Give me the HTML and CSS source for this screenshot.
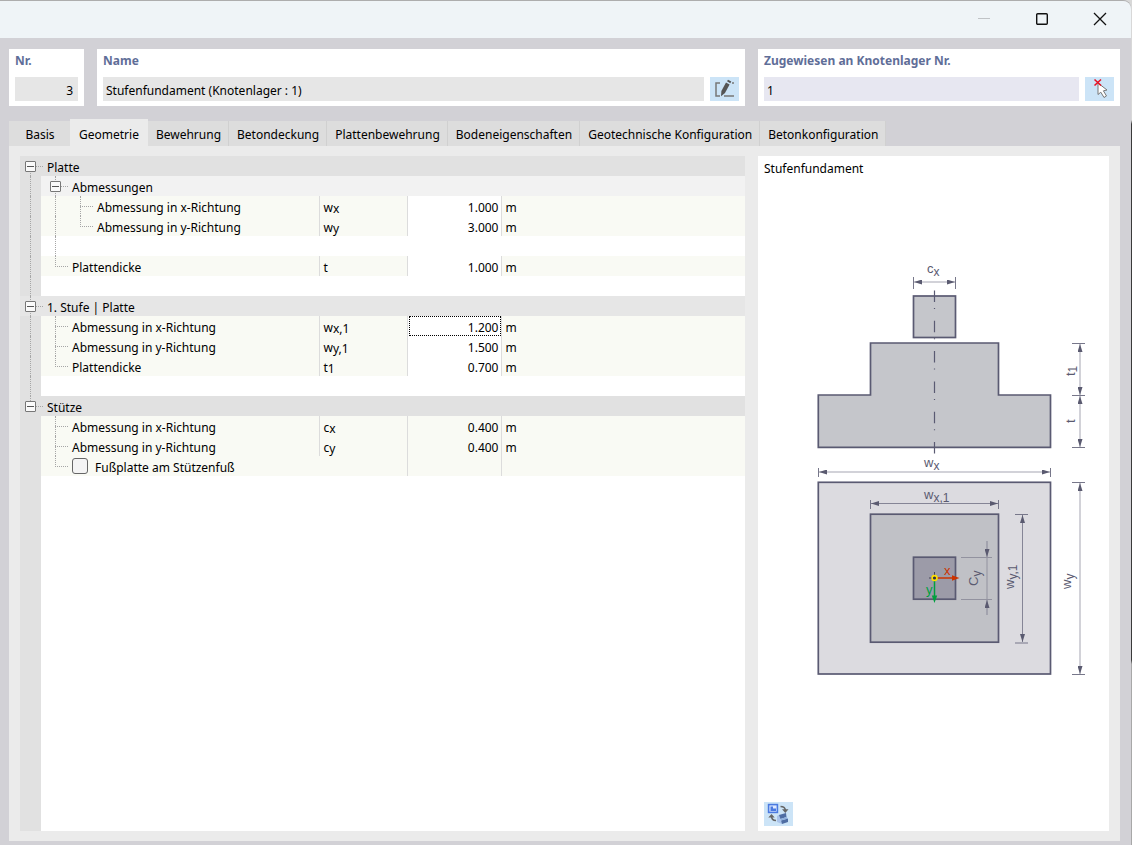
FILE: index.html
```
<!DOCTYPE html>
<html lang="de">
<head>
  <meta charset="UTF-8">
  <title>Stufenfundament</title>
  <link rel="stylesheet" href="styles.css">
</head>
<body>
  <div class="window">
    <div class="title-bar">
      <button class="win-btn" aria-label="Minimieren" disabled>
        <svg width="14" height="14"><path d="M1 6.5h12" stroke="#c0c3c6"/></svg>
      </button>
      <button class="win-btn" aria-label="Maximieren">
        <svg width="14" height="14"><rect x="1.7" y="1.7" width="10.6" height="10.6" rx="1" fill="none" stroke="#111" stroke-width="1.4"/></svg>
      </button>
      <button class="win-btn" aria-label="Schließen">
        <svg width="14" height="14"><path d="M1 1l12 12M13 1L1 13" stroke="#111" stroke-width="1.3"/></svg>
      </button>
    </div>

    <div class="content">
      <div class="head">
        <div class="box box-nr">
          <label for="nr">Nr.</label>
          <div class="field-row"><input class="field num" id="nr" value="3" readonly></div>
        </div>
        <div class="box box-name">
          <label for="name">Name</label>
          <div class="field-row">
            <input class="field" id="name" value="Stufenfundament (Knotenlager : 1)" readonly>
            <button class="icon-btn" aria-label="Name bearbeiten">
              <svg width="29" height="24">
                <path d="M10 6H6v13h4M14 19h10M22 6h2" fill="none" stroke="#777" stroke-width="1.5"/>
                <path d="M16 5.5l3.6 2-4.6 8.5-4 3.2.4-5.2z" fill="#555"/>
                <path d="M17 4.3l1-1.6 3.3 1.9-1 1.7z" fill="#555"/>
              </svg>
            </button>
          </div>
        </div>
      </div>
      <div class="box">
        <label for="assigned">Zugewiesen an Knotenlager Nr.</label>
        <div class="field-row">
          <input class="field assigned" id="assigned" value="1">
          <button class="icon-btn" aria-label="Auswählen">
            <svg width="29" height="24">
              <path d="M13 6v11.5l2.8-2.3 3.2 5.3 2.5-1.5-3.1-5.2 3.6-.8z" fill="#fff" stroke="#777"/>
              <path d="M9.5 2.5l6.5 6M16 2.5l-6.5 6" stroke="#e81123" stroke-width="1.6"/>
            </svg>
          </button>
        </div>
      </div>
    </div>

    <div class="tabs" role="tablist">
      <button class="tab first" role="tab">Basis</button>
      <button class="tab active" role="tab" aria-selected="true">Geometrie</button>
      <button class="tab" role="tab">Bewehrung</button>
      <button class="tab" role="tab">Betondeckung</button>
      <button class="tab" role="tab">Plattenbewehrung</button>
      <button class="tab" role="tab">Bodeneigenschaften</button>
      <button class="tab" role="tab">Geotechnische Konfiguration</button>
      <button class="tab" role="tab">Betonkonfiguration</button>
    </div>

    <div class="page">
      <div class="tree">
        <table>
          <colgroup>
            <col class="col-name"><col class="col-sym"><col class="col-val"><col>
          </colgroup>
          <tbody>
            <tr class="group"><td colspan="4"><div class="cell"><span class="guide start"><button class="toggle" aria-label="Platte einklappen"></button></span>Platte</div></td></tr>
            <tr class="subgroup"><td class="name" colspan="4"><div class="cell"><span class="guide line"></span><span class="guide tee"><button class="toggle" aria-label="Abmessungen einklappen"></button></span>Abmessungen</div></td></tr>
            <tr class="edit">
              <td class="name"><div class="cell"><span class="guide line"></span><span class="guide line"></span><span class="guide tee"></span><label for="wx">Abmessung in x-Richtung</label></div></td>
              <td>w<sub>x</sub></td><td class="val"><input id="wx" value="1.000"></td><td>m</td>
            </tr>
            <tr class="edit">
              <td class="name"><div class="cell"><span class="guide line"></span><span class="guide line"></span><span class="guide end"></span><label for="wy">Abmessung in y-Richtung</label></div></td>
              <td>w<sub>y</sub></td><td class="val"><input id="wy" value="3.000"></td><td>m</td>
            </tr>
            <tr class="blank"><td class="name" colspan="4"><div class="cell"><span class="guide line"></span><span class="guide line"></span></div></td></tr>
            <tr class="edit">
              <td class="name"><div class="cell"><span class="guide line"></span><span class="guide end"></span><label for="t">Plattendicke</label></div></td>
              <td>t</td><td class="val"><input id="t" value="1.000"></td><td>m</td>
            </tr>
            <tr class="blank"><td class="name" colspan="4"><div class="cell"><span class="guide line"></span></div></td></tr>

            <tr class="group light"><td colspan="4"><div class="cell"><span class="guide tee"><button class="toggle" aria-label="1. Stufe einklappen"></button></span>1. Stufe | Platte</div></td></tr>
            <tr class="edit">
              <td class="name"><div class="cell"><span class="guide line"></span><span class="guide tee"></span><label for="wx1">Abmessung in x-Richtung</label></div></td>
              <td>w<sub>x,1</sub></td><td class="val"><input class="current" id="wx1" value="1.200"></td><td>m</td>
            </tr>
            <tr class="edit">
              <td class="name"><div class="cell"><span class="guide line"></span><span class="guide tee"></span><label for="wy1">Abmessung in y-Richtung</label></div></td>
              <td>w<sub>y,1</sub></td><td class="val"><input id="wy1" value="1.500"></td><td>m</td>
            </tr>
            <tr class="edit">
              <td class="name"><div class="cell"><span class="guide line"></span><span class="guide end"></span><label for="t1">Plattendicke</label></div></td>
              <td>t<sub>1</sub></td><td class="val"><input id="t1" value="0.700"></td><td>m</td>
            </tr>
            <tr class="blank"><td class="name" colspan="4"><div class="cell"><span class="guide line"></span></div></td></tr>

            <tr class="group"><td colspan="4"><div class="cell"><span class="guide end"><button class="toggle" aria-label="Stütze einklappen"></button></span>Stütze</div></td></tr>
            <tr>
              <td class="name"><div class="cell"><span class="guide"></span><span class="guide tee"></span><label for="cx">Abmessung in x-Richtung</label></div></td>
              <td>c<sub>x</sub></td><td class="val"><input id="cx" value="0.400" readonly></td><td>m</td>
            </tr>
            <tr>
              <td class="name"><div class="cell"><span class="guide"></span><span class="guide tee"></span><label for="cy">Abmessung in y-Richtung</label></div></td>
              <td>c<sub>y</sub></td><td class="val"><input id="cy" value="0.400" readonly></td><td>m</td>
            </tr>
            <tr>
              <td class="name" colspan="2"><div class="cell"><span class="guide"></span><span class="guide end"></span><label class="check"><input type="checkbox">Fußplatte am Stützenfuß</label></div></td>
              <td></td><td></td>
            </tr>
          </tbody>
        </table>
      </div>

      <div class="preview">
        <div class="preview-title">Stufenfundament</div>
        <svg class="drawing" viewBox="0 0 301 430" width="301" height="430">
          <defs>
            <marker id="arrow" viewBox="0 0 8 5" refX="8" refY="2.5" markerWidth="8" markerHeight="5" markerUnits="userSpaceOnUse" orient="auto-start-reverse">
              <path d="M0 0l8 2.5L0 5z" fill="#5a5a70"/>
            </marker>
          </defs>

          <!-- Ansicht -->
          <g fill="#c5c6cb" stroke="#5a5a72" stroke-width="1.7">
            <rect x="129.5" y="41" width="42" height="41.5"/>
            <path d="M86.5 88h128v52h52v52.3H34.3V140h52.2z"/>
          </g>
          <path d="M150.5 35.5v163" stroke="#5a5a72" stroke-width="1.2" stroke-dasharray="11.5 6 1 11.8"/>

          <!-- Grundriss -->
          <g stroke="#5a5a72" stroke-width="1.7">
            <rect x="34.3" y="227.3" width="232.2" height="191.7" fill="#dcdbe0"/>
            <rect x="86.5" y="259.2" width="128" height="128" fill="#c0c1c6"/>
            <rect x="129.5" y="302.2" width="42" height="42" fill="#9c9ba8"/>
          </g>

          <!-- Maßlinien -->
          <g fill="none" stroke="#77778a">
            <path d="M129.5 22v12M171.5 22v12M34.5 213v9M266.5 213v9M86.5 245v9M214.5 245v9"/>
            <path d="M288 88.5h13M288 140.5h13M288 192.5h13M288 227.5h13M288 419.5h13M231 259.5h13M231 388h13"/>
            <path d="M177 302.5h31M177 344.5h31M203 302v42" stroke="#92929f"/>
          </g>
          <g fill="none" stroke="#a5a5b2" marker-start="url(#arrow)">
            <path d="M130 27h41" marker-end="url(#arrow)"/>
            <path d="M35 217h231" marker-end="url(#arrow)"/>
            <path d="M87 248.5h127" stroke="#858596" marker-end="url(#arrow)"/>
            <path d="M296 89v51" marker-end="url(#arrow)"/>
            <path d="M296 141v51" marker-end="url(#arrow)"/>
            <path d="M296 228v191" marker-end="url(#arrow)"/>
            <path d="M238.5 260v127" stroke="#858596" marker-end="url(#arrow)"/>
            <path d="M203 302v-16" stroke="#858596"/>
            <path d="M203 345v15" stroke="#858596"/>
          </g>

          <g class="dim">
            <text x="143" y="18">c<tspan class="s" dy="3">x</tspan></text>
            <text x="140" y="212">w<tspan class="s" dy="3">x</tspan></text>
            <text x="140" y="244">w<tspan class="s" dy="3">x,1</tspan></text>
            <text transform="translate(291 121) rotate(-90)">t<tspan class="s" dy="2">1</tspan></text>
            <text transform="translate(291 168) rotate(-90)">t</text>
            <text transform="translate(194 331) rotate(-90)">C<tspan class="s" dy="3">y</tspan></text>
            <text transform="translate(230 334) rotate(-90)">w<tspan class="s" dy="3">y,1</tspan></text>
            <text transform="translate(287 334) rotate(-90)">w<tspan class="s" dy="3">y</tspan></text>
          </g>

          <!-- Achsen -->
          <path d="M145 323h3M150.5 317v3" stroke="#44445a"/>
          <path d="M153.5 323h15" stroke="#cc3300" stroke-width="1.5"/>
          <path d="M168 320.3l7.5 2.7-7.5 2.7z" fill="#cc3300"/>
          <path d="M150.5 326v15" stroke="#00a040" stroke-width="1.5"/>
          <path d="M147.8 340.5l2.7 7.5 2.7-7.5z" fill="#00a040"/>
          <circle cx="150.5" cy="323" r="2.4" fill="#33334a" stroke="#ffe000" stroke-width="1.6"/>
          <text class="axis-x" x="160" y="320">x</text>
          <text class="axis-y" x="142" y="339">y</text>
        </svg>
        <button class="icon-btn" aria-label="Ansicht wechseln">
          <svg width="29" height="24">
            <rect x="4.6" y="2.6" width="8.8" height="7.8" fill="#dfe9ff" stroke="#4a7ae0" stroke-width="1.6"/>
            <path d="M6.5 4.5h2.5v2h3V9H6.5z" fill="#4a7ae0"/>
            <path d="M16.5 4.5c3.3 0 4.8 1.5 4.8 4M12 18.5c-3 0-4.5-2-4.5-4.5" fill="none" stroke="#666" stroke-width="1.6"/>
            <path d="M18 7.3h6.5l-3.2 3.7zM4.3 15.5h6.4L7.5 12z" fill="#666"/>
            <path d="M13 14l2.5-1.5L18 22l-5-2z" fill="#a9c3ea"/>
            <path d="M15 13l7-2 .5 4-6 2z" fill="#4f6da3"/>
            <path d="M17 18.5l7-2V20l-6 2z" fill="#4f6da3"/>
            <path d="M16.5 17l6-2 1.5 1.5-7 2z" fill="#8fb0de"/>
          </svg>
        </button>
      </div>
    </div>
  </div>
</body>
</html>
```
FILE: styles.css
```
* {
  box-sizing: border-box;
}

body {
  margin: 0;
  font-family: "Noto Sans", "Open Sans", sans-serif;
  font-size: 12px;
  line-height: 20px;
  color: #000;
  background: linear-gradient(#d8d8d8 120px, #3a3a3a 124px, #3a3a3a 660px, #a8a8a8 664px);
}

button, input {
  font: inherit;
  color: inherit;
  margin: 0;
  padding: 0;
  border: none;
  border-radius: 0;
  background: none;
}

.window {
  display: flex;
  flex-direction: column;
  min-height: 100vh;
  margin-right: 1px;
  padding-bottom: 4px;
  background: #d2d1d6;
  border-top: 1px solid #adadad;
  border-top-right-radius: 8px;
}

.title-bar {
  display: flex;
  justify-content: flex-end;
  height: 37px;
  padding: 0 2px 2px 0;
  background: #eff4f7;
  border-top-right-radius: 8px;
}

.win-btn {
  display: flex;
  align-items: center;
  justify-content: center;
  width: 58px;
}

/* Kopfbereich */
.content {
  display: grid;
  grid-template-columns: 736fr 362fr;
  gap: 13px;
  padding: 11px 11px 0 9px;
}

.head {
  display: flex;
  gap: 13px;
}

.box {
  padding: 1px 6px 5px;
  background: #fff;
}

.box-nr {
  width: 75px;
}

.box-name {
  flex: 1;
}

.box > label {
  display: block;
  margin-bottom: 5px;
  line-height: 22px;
  font-weight: bold;
  color: #5f6e98;
}

.field-row {
  display: flex;
  gap: 6px;
}

.field {
  flex: 1;
  min-width: 0;
  height: 24px;
  padding: 3px 3px 0;
  background: #e6e6e6;
}

.field.num {
  padding-right: 5px;
  text-align: right;
}

.field.assigned {
  background: #e7e7f1;
}

.icon-btn {
  width: 29px;
  height: 24px;
  background: #cce4f7;
}

.icon-btn svg {
  display: block;
}

/* Register */
.tabs {
  display: flex;
  align-items: flex-end;
  margin: 13px 11px 0 9px;
}

.tab {
  height: 25px;
  padding: 2px 7px 0 8px;
  background: #dddddd;
  border-right: 1px solid #d0d0d0;
  white-space: nowrap;
}

.tab.first {
  width: 61px;
  border-right: none;
}

.tab.active {
  height: 27px;
  padding: 4px 9px 0;
  background: #ebebeb;
  border-right: none;
}

.page {
  flex: 1;
  display: grid;
  grid-template-columns: 725fr 351fr;
  gap: 13px;
  margin: 0 11px 0 9px;
  padding: 10px 11px;
  background: #ebebeb;
}

/* Eigenschaftenbaum */
.tree {
  background: linear-gradient(to right, #e1e1e1 21px, #fff 21px);
}

table {
  width: 100%;
  table-layout: fixed;
  border-collapse: collapse;
}

.col-name {
  width: 299px;
}

.col-sym {
  width: 88px;
}

.col-val {
  width: 94px;
}

td {
  height: 20px;
  padding: 3px 0 0 4px;
  line-height: 17px;
  background: #f9faf4;
  border-left: 1px solid #dcdcdc;
  white-space: nowrap;
}

.group td {
  padding: 0;
  background: #e1e1e1;
  border: none;
}

.group.light td {
  background: #e6e6e6;
}

td.name {
  padding: 0;
  background: linear-gradient(to right, #e1e1e1 21px, #f9faf4 21px);
  border: none;
}

.subgroup td.name {
  background: linear-gradient(to right, #e1e1e1 21px, #f2f2f2 21px);
}

.blank td.name {
  background: none;
}

.edit .val {
  background: #fff;
}

td.val {
  padding: 0 0 0 1px;
}

.val input {
  display: block;
  width: 100%;
  height: 20px;
  padding: 3px 2px 0 0;
  text-align: right;
}

.val input.current {
  border: 1px dotted #000;
  padding: 2px 1px 0 0;
}

sub {
  font-size: 12px;
  line-height: 0;
  vertical-align: -1px;
}

.cell {
  display: flex;
  height: 20px;
  padding-left: 2px;
  line-height: 24px;
}

/* Verbindungslinien */
.guide {
  position: relative;
  flex: none;
  width: 25px;
  height: 20px;
}

.guide::before {
  content: "";
  position: absolute;
  left: 8px;
  top: 0;
  bottom: 0;
}

.guide.line::before,
.guide.tee::before,
.guide.end::before,
.guide.start::before {
  border-left: 1px dotted #a6a6a6;
}

.guide.end::before {
  bottom: 9px;
}

.guide.start::before {
  top: 10px;
}

.guide.tee::after,
.guide.end::after,
.guide.start::after {
  content: "";
  position: absolute;
  left: 8px;
  top: 10px;
  width: 13px;
  border-top: 1px dotted #a6a6a6;
}

.toggle {
  position: absolute;
  left: 3px;
  top: 5px;
  z-index: 1;
  width: 11px;
  height: 11px;
  background: linear-gradient(#555, #555) center / 7px 1px no-repeat #fafafa;
  border: 1px solid #777;
  border-radius: 1px;
}

.check {
  display: flex;
  gap: 7px;
}

.check input {
  appearance: none;
  width: 16px;
  height: 16px;
  margin-top: 2px;
  background: #f4f4f4;
  border: 1px solid #666;
  border-radius: 3px;
}

/* Vorschau */
.preview {
  display: flex;
  flex-direction: column;
  padding: 2px 5px 5px 6px;
  background: #fff;
}

.preview-title {
  line-height: 22px;
}

.drawing {
  align-self: center;
  margin-top: 75px;
  font-family: "Liberation Sans", Arial, sans-serif;
  font-size: 13px;
}

.dim {
  fill: #5a5a70;
}

.dim .s {
  font-size: 12px;
}

.axis-x {
  fill: #cc3300;
}

.axis-y {
  fill: #00a040;
}

.preview .icon-btn {
  margin-top: auto;
}
```
